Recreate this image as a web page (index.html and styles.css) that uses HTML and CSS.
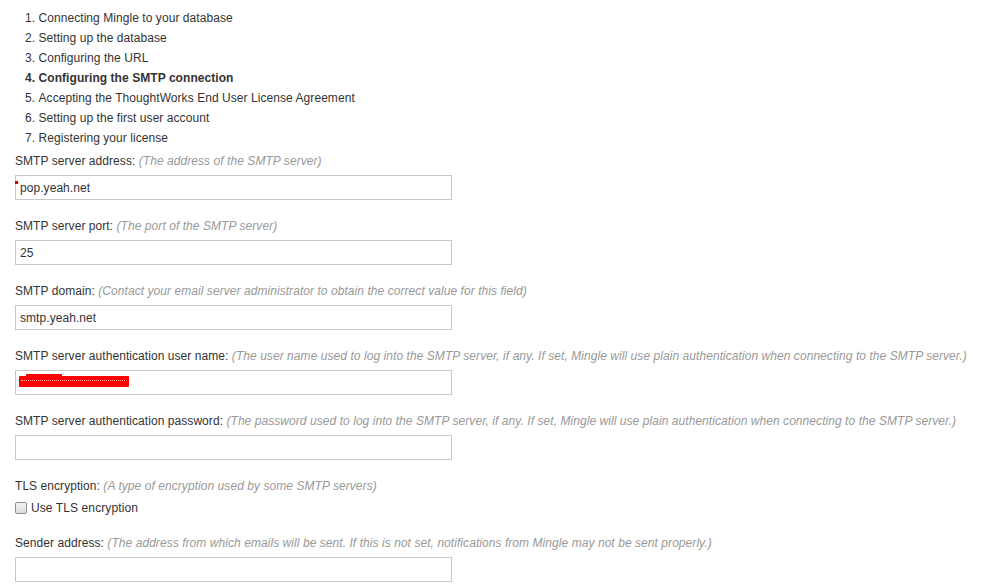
FILE: index.html
```html
<!DOCTYPE html>
<html>
<head>
<meta charset="utf-8">
<link rel="stylesheet" href="styles.css">
</head>
<body>
<div class="page">
  <ol class="steps">
    <li>Connecting Mingle to your database</li>
    <li>Setting up the database</li>
    <li>Configuring the URL</li>
    <li class="current">Configuring the SMTP connection</li>
    <li>Accepting the ThoughtWorks End User License Agreement</li>
    <li>Setting up the first user account</li>
    <li>Registering your license</li>
  </ol>

  <div class="field">
    <label class="label">SMTP server address: <span class="hint">(The address of the SMTP server)</span></label>
    <div class="input-wrap">
      <input class="text" type="text" value="pop.yeah.net">
      <span class="mark-dot"></span>
    </div>
  </div>

  <div class="field">
    <label class="label">SMTP server port: <span class="hint">(The port of the SMTP server)</span></label>
    <div class="input-wrap"><input class="text" type="text" value="25"></div>
  </div>

  <div class="field">
    <label class="label">SMTP domain: <span class="hint">(Contact your email server administrator to obtain the correct value for this field)</span></label>
    <div class="input-wrap"><input class="text" type="text" value="smtp.yeah.net"></div>
  </div>

  <div class="field">
    <label class="label">SMTP server authentication user name: <span class="hint">(The user name used to log into the SMTP server, if any. If set, Mingle will use plain authentication when connecting to the SMTP server.)</span></label>
    <div class="input-wrap">
      <input class="text" type="text" value="">
      <span class="redact"><span class="redact-top"></span><span class="redact-line"></span></span>
    </div>
  </div>

  <div class="field">
    <label class="label">SMTP server authentication password: <span class="hint">(The password used to log into the SMTP server, if any. If set, Mingle will use plain authentication when connecting to the SMTP server.)</span></label>
    <div class="input-wrap"><input class="text" type="password" value=""></div>
  </div>

  <div class="field">
    <label class="label">TLS encryption: <span class="hint">(A type of encryption used by some SMTP servers)</span></label>
    <div class="check-row"><span class="checkbox"></span><span class="check-text">Use TLS encryption</span></div>
  </div>

  <div class="field">
    <label class="label">Sender address: <span class="hint">(The address from which emails will be sent. If this is not set, notifications from Mingle may not be sent properly.)</span></label>
    <div class="input-wrap"><input class="text" type="text" value=""></div>
  </div>
</div>
</body>
</html>
```

FILE: styles.css
```css
html, body {
  margin: 0;
  padding: 0;
  background: #ffffff;
}
body {
  font-family: "Liberation Sans", Arial, sans-serif;
  font-size: 12px;
  letter-spacing: 0.06px;
  color: #333333;
}
.page {
  padding: 8px 0 0 15px;
}
.steps {
  margin: 0;
  padding: 0 0 0 10px;
  list-style-position: inside;
  line-height: 20px;
}
.steps li.current {
  font-weight: bold;
}
.field {
  margin-top: 3px;
  margin-bottom: 16px;
}
.label {
  display: block;
  line-height: 20px;
  margin-bottom: 4px;
}
.hint {
  font-style: italic;
  color: #999999;
}
.input-wrap {
  position: relative;
  width: 437px;
}
.text {
  display: block;
  box-sizing: border-box;
  width: 437px;
  height: 25px;
  margin: 0;
  padding: 0 4px;
  border: 1px solid #c8c8c8;
  font-family: "Liberation Sans", Arial, sans-serif;
  font-size: 12px;
  letter-spacing: 0.06px;
  color: #333333;
  background: #fff;
  outline: none;
}
.mark-dot {
  position: absolute;
  left: 0;
  top: 6px;
  width: 3px;
  height: 3px;
  background: #d00000;
}
.redact {
  position: absolute;
  left: 4px;
  top: 6px;
  width: 110px;
  height: 11px;
  background: #ff0000;
  border-radius: 1px;
}
.redact-top {
  position: absolute;
  left: 7px;
  top: -2px;
  width: 36px;
  height: 3px;
  background: #ff0000;
}
.redact-line {
  position: absolute;
  left: 2px;
  right: 4px;
  top: 4px;
  border-top: 1px dotted rgba(255, 255, 255, 0.7);
}
.check-row {
  display: flex;
  align-items: center;
  height: 20px;
  margin-top: -2px;
  margin-bottom: -1px;
}
.checkbox {
  box-sizing: border-box;
  width: 12px;
  height: 12px;
  border: 1px solid #8f8f8f;
  border-radius: 2px;
  background: linear-gradient(#f4f4f4, #dcdcdc);
  margin-right: 4px;
}
.check-text {
  font-size: 12px;
  letter-spacing: 0.1px;
  color: #333333;
}
```
